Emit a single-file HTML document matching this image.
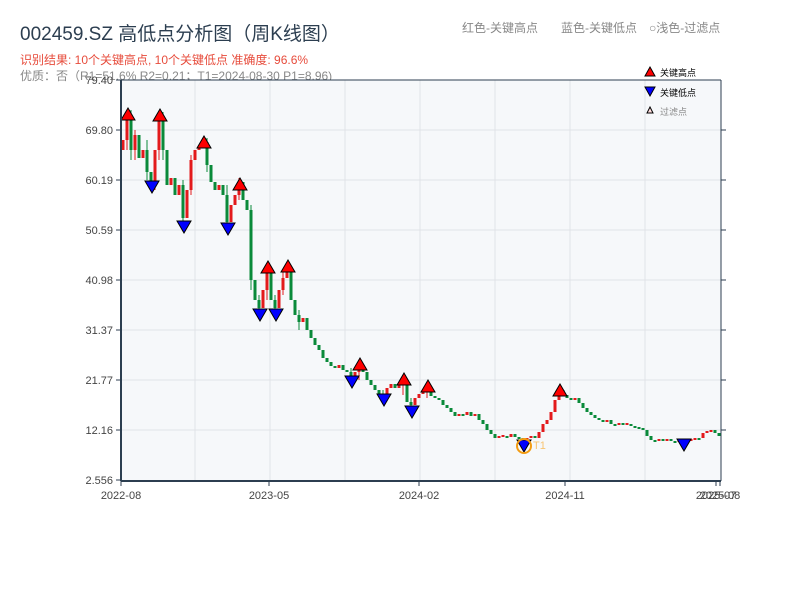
<!DOCTYPE html>
<html><head><meta charset="utf-8"><style>
body{margin:0;background:#fff;width:800px;height:600px;overflow:hidden}
</style></head><body>
<svg width="800" height="600" xmlns="http://www.w3.org/2000/svg" font-family="Liberation Sans, Noto Sans CJK SC, sans-serif">
<text x="20" y="40" font-size="19" fill="#2c3e50">002459.SZ 高低点分析图（周K线图）</text>
<text x="20" y="64" font-size="12" fill="#e74c3c">识别结果: 10个关键高点, 10个关键低点   准确度: 96.6%</text>
<text x="20" y="80" font-size="12" fill="#888">优质：否（R1=51.6%  R2=0.21；T1=2024-08-30 P1=8.96)</text>
<text x="462" y="32" font-size="12" fill="#888">红色-关键高点</text>
<text x="561" y="32" font-size="12" fill="#888">蓝色-关键低点</text>
<text x="649" y="32" font-size="12" fill="#888">○浅色-过滤点</text>
<rect x="121" y="80" width="600" height="401" fill="#f6f8fa"/>
<g stroke="#e0e3e8" stroke-width="1">
<path d="M195 80V481M270 80V481M345 80V481M420 80V481M495 80V481M570 80V481M645 80V481M121 130H721M121 180H721M121 230H721M121 280H721M121 330H721M121 380H721M121 430H721"/>
</g>
<path fill="none" stroke="#e31a1c" stroke-width="3" d="M123 150V140M127 140V118M135 150V135M143 158V150M155 182V150M159 150V118M171 185V178M179 195V185M187 218V190M191 190V160M195 160V150M199 150V148M203 148V142M219 190V185M231 222V205M235 205V195M239 195V182M263 308V290M267 290V272M279 308V290M283 290V278M287 278V272M303 322V318M339 368V365M355 378V372M359 372V366M387 397V388M391 388V384M399 388V383M403 383V381M415 405V398M419 398V394M423 394V390M427 390V388M459 416V414M467 415V412M475 416V414M499 438V436M503 437V435M511 437V434M527 440V438M531 438V436M539 438V432M543 432V424M547 424V420M551 420V412M555 412V400M559 400V390M575 400V398M607 422V420M619 425V423M627 425V423M659 441V439M667 441V439M679 442V440M687 443V441M691 441V439M695 440V438M703 438V433M707 433V431M711 432V430"/>
<path fill="none" stroke="#0a8a3a" stroke-width="3" d="M131 118V150M139 135V158M147 150V172M151 172V182M163 118V150M167 150V185M175 178V195M183 185V218M207 142V165M211 165V182M215 182V190M223 185V195M227 195V222M243 182V200M247 200V210M251 210V280M255 280V300M259 300V308M271 272V300M275 300V308M291 272V300M295 300V315M299 315V322M307 318V330M311 330V338M315 338V345M319 345V350M323 350V358M327 358V362M331 362V366M335 366V368M343 365V370M347 370V372M351 372V378M363 366V372M367 372V380M371 380V385M375 385V390M379 390V395M383 395V397M395 384V388M407 382V402M411 402V405M431 388V396M435 396V398M439 398V400M443 400V405M447 405V408M451 408V412M455 412V416M463 414V416M471 412V416M479 414V420M483 420V424M487 424V430M491 430V434M495 434V438M507 436V438M515 434V437M519 437V439M523 438V440M535 436V438M563 390V395M567 395V398M571 398V400M579 398V403M583 403V408M587 408V412M591 412V415M595 415V418M599 418V420M603 420V422M611 420V424M615 424V426M623 423V425M631 424V426M635 426V428M639 427V429M643 428V430M647 430V436M651 436V440M655 440V442M663 439V441M671 439V441M675 441V443M683 440V443M699 438V440M715 430V433M719 433V436"/>
<path fill="none" stroke="#e31a1c" stroke-width="1" d="M127 112V150M135 130V160M155 175V190M159 112V160M191 155V195M239 178V200M267 268V300M283 270V295M359 362V380M403 378V395M427 385V398"/>
<path fill="none" stroke="#0a8a3a" stroke-width="1" d="M131 110V160M147 140V180M163 112V160M183 180V225M207 138V172M227 185V230M251 205V290M259 295V312M275 295V312M299 310V330M351 368V382M383 390V402M411 398V412"/>
<g stroke="#000" stroke-width="1">
<polygon fill="#f00" points="128,108 135,120 121,120"/><polygon fill="#f00" points="160,109 167,121 153,121"/><polygon fill="#f00" points="204,136 211,148 197,148"/><polygon fill="#f00" points="240,178 247,190 233,190"/><polygon fill="#f00" points="268,261 275,273 261,273"/><polygon fill="#f00" points="288,260 295,272 281,272"/><polygon fill="#f00" points="360,358 367,370 353,370"/><polygon fill="#f00" points="404,373 411,385 397,385"/><polygon fill="#f00" points="428,380 435,392 421,392"/><polygon fill="#f00" points="560,384 567,396 553,396"/>
<polygon fill="#00f" points="152,193 159,181 145,181"/><polygon fill="#00f" points="184,233 191,221 177,221"/><polygon fill="#00f" points="228,235 235,223 221,223"/><polygon fill="#00f" points="260,321 267,309 253,309"/><polygon fill="#00f" points="276,321 283,309 269,309"/><polygon fill="#00f" points="352,388 359,376 345,376"/><polygon fill="#00f" points="384,406 391,394 377,394"/><polygon fill="#00f" points="412,418 419,406 405,406"/><polygon fill="#00f" points="524,452 531,440 517,440"/><polygon fill="#00f" points="684,451 691,439 677,439"/>
</g>
<circle cx="524" cy="446" r="7" fill="none" stroke="#f39c12" stroke-width="2"/>
<text x="533" y="449" font-size="11" fill="#f8c471">T1</text>
<line x1="121" y1="80" x2="721" y2="80" stroke="#2c3e50" stroke-width="1"/>
<line x1="121" y1="80" x2="121" y2="481" stroke="#2c3e50" stroke-width="2"/>
<line x1="121" y1="481" x2="721" y2="481" stroke="#2c3e50" stroke-width="2"/>
<line x1="721" y1="80" x2="721" y2="481" stroke="#2c3e50" stroke-width="1"/>
<path stroke="#2c3e50" d="M116 80H121M116 130H121M116 180H121M116 230H121M116 280H121M116 330H121M116 380H121M116 430H121M116 480H121M721 130H726M721 180H726M721 230H726M721 280H726M721 330H726M721 380H726M721 430H726M121 481V486M269 481V486M419 481V486M565 481V486M716 481V486M720 481V486"/>
<g font-size="11" fill="#444" text-anchor="end">
<text x="113" y="84">79.40</text><text x="113" y="134">69.80</text><text x="113" y="184">60.19</text><text x="113" y="234">50.59</text><text x="113" y="284">40.98</text><text x="113" y="334">31.37</text><text x="113" y="384">21.77</text><text x="113" y="434">12.16</text><text x="113" y="484">2.556</text>
</g>
<g font-size="11" fill="#444" text-anchor="middle">
<text x="121" y="499">2022-08</text><text x="269" y="499">2023-05</text><text x="419" y="499">2024-02</text><text x="565" y="499">2024-11</text><text x="716" y="499">2025-07</text><text x="720" y="499">2025-08</text>
</g>
<g font-size="9" fill="#000">
<polygon points="650,67 655,76 645,76" fill="#f00" stroke="#000"/><text x="660" y="76">关键高点</text>
<polygon points="645,87 655,87 650,96" fill="#00f" stroke="#000"/><text x="660" y="96">关键低点</text>
<polygon points="650,107 653,113 647,113" fill="#fdd" stroke="#000"/><text x="660" y="115" fill="#888">过滤点</text>
</g>
</svg>
</body></html>
